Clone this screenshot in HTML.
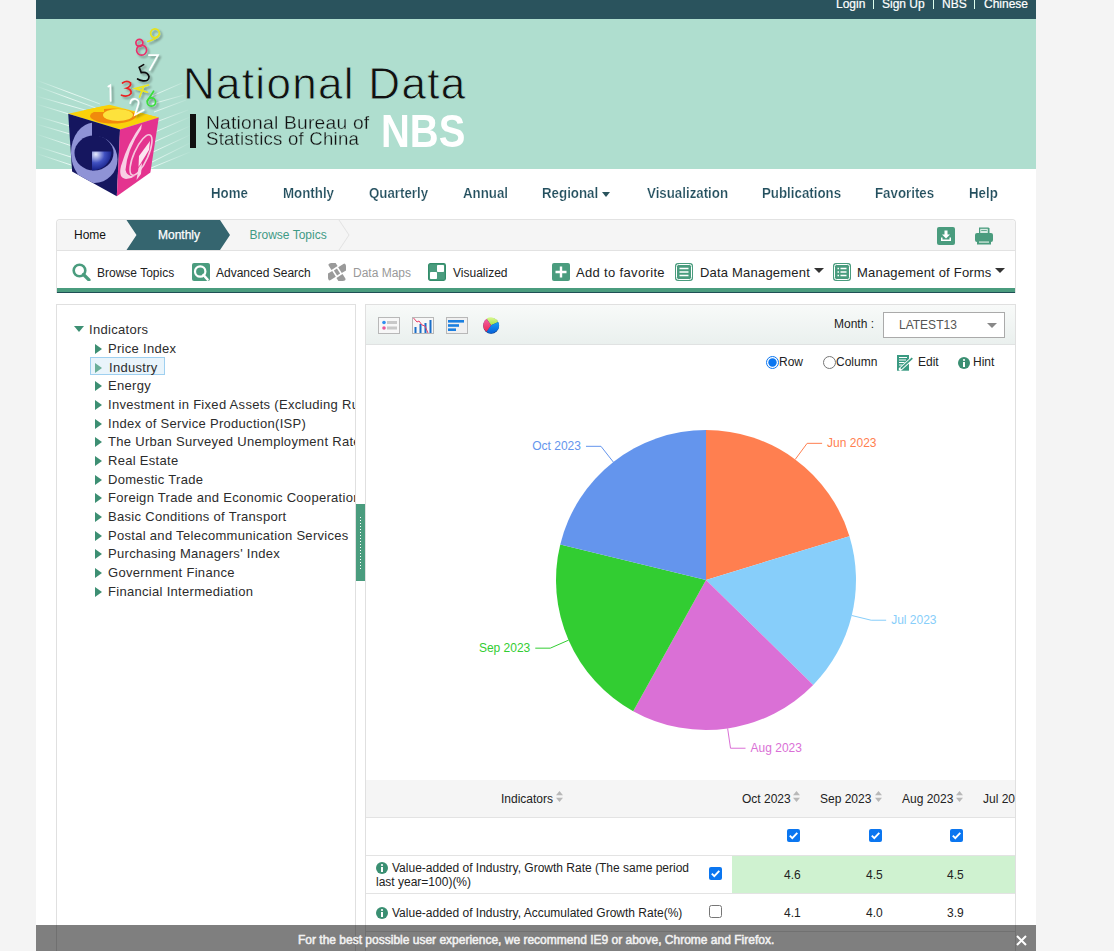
<!DOCTYPE html>
<html><head><meta charset="utf-8">
<style>
*{margin:0;padding:0;box-sizing:border-box}
html,body{width:1114px;height:951px;overflow:hidden;background:#f4f4f4;font-family:"Liberation Sans",sans-serif;color:#222}
.a{position:absolute;white-space:nowrap}
#wrap{position:absolute;left:36px;top:0;width:1000px;height:951px;background:#fff}
#topbar{position:absolute;left:36px;top:0;width:1000px;height:19px;background:#2a535d}
#banner{position:absolute;left:36px;top:19px;width:1000px;height:150px;background:#afdecf;overflow:hidden}
.tb{color:#fff;font-size:12px;top:-4px;line-height:16px;-webkit-text-stroke:0.2px #fff}
.sep{position:absolute;top:-1px;width:1px;height:10px;background:#dfe}
.nav{font-size:14px;font-weight:bold;color:#234f5e;top:185px;line-height:16px;transform:scaleX(0.95);transform-origin:0 0;-webkit-text-stroke:0.2px #fff}
#crumb{position:absolute;left:56px;top:219px;width:960px;height:74px;border:1px solid #e2e2e2;border-bottom:none;border-radius:4px 4px 0 0;background:#fff}
#crumbbar{position:absolute;left:0;top:0;width:958px;height:31px;background:#f5f5f5;border-bottom:1px solid #e2e2e2;border-radius:4px 4px 0 0}
#greenline{position:absolute;left:57px;top:288px;width:958px;height:4px;background:#4a9c7e}
#darkline{position:absolute;left:57px;top:292px;width:958px;height:1px;background:#1f4f55}
.tool{font-size:12px;top:266px;line-height:14px;color:#222}
.tool2{font-size:13px;top:265px;line-height:15px;color:#222;letter-spacing:0.2px}
#tree{position:absolute;left:56px;top:304px;width:300px;height:700px;border:1px solid #e0e0e0;background:#fff}
.tr{position:absolute;left:108px;font-size:13px;letter-spacing:0.3px;color:#2c2c2c;line-height:15px;white-space:nowrap}
.tri{position:absolute;left:95px;width:0;height:0;border-top:5px solid transparent;border-bottom:5px solid transparent;border-left:7px solid #3d8f73}
#chart{position:absolute;left:365px;top:304px;width:651px;height:700px;border:1px solid #e0e0e0;background:#fff}
#chead{position:absolute;left:0;top:0;width:649px;height:40px;background:linear-gradient(#f8faf9,#eaf0ee);border-bottom:1px solid #e0e2e2}
.sm{font-size:12px;line-height:14px;color:#222}
</style></head><body>
<div id="wrap"></div>
<div id="topbar"></div>
<div id="banner"></div>

<!-- top links -->
<div class="a tb" style="left:836px">Login</div>
<div class="sep" style="left:873px"></div>
<div class="a tb" style="left:882px">Sign Up</div>
<div class="sep" style="left:933px"></div>
<div class="a tb" style="left:942px">NBS</div>
<div class="sep" style="left:974px"></div>
<div class="a tb" style="left:984px">Chinese</div>


<!-- logo -->
<svg class="a" style="left:36px;top:19px" width="170" height="185" viewBox="36 19 170 185">
<defs>
<radialGradient id="ball" cx="0.2" cy="0.15" r="0.9"><stop offset="0" stop-color="#e8ecff"/><stop offset="0.5" stop-color="#4050c0"/><stop offset="1" stop-color="#101a80"/></radialGradient>
<clipPath id="lf"><polygon points="68.2,113.7 120,129.4 116.8,196.2 72.1,171.5"/></clipPath>
<clipPath id="rf"><polygon points="120,129.4 158.8,117.4 150.4,172.6 116.8,196.2"/></clipPath>
<clipPath id="tf"><polygon points="68.2,113.7 109.4,104.7 158.8,117.4 120,129.4"/></clipPath>
<clipPath id="mint"><rect x="36" y="19" width="170" height="150"/></clipPath>
</defs>
<linearGradient id="rfade" gradientUnits="userSpaceOnUse" x1="150" y1="0" x2="192" y2="0"><stop offset="0" stop-color="#f4fffb" stop-opacity="0.9"/><stop offset="1" stop-color="#f4fffb" stop-opacity="0"/></linearGradient>
<linearGradient id="lfade" gradientUnits="userSpaceOnUse" x1="36" y1="0" x2="100" y2="0"><stop offset="0" stop-color="#f4fffb" stop-opacity="0"/><stop offset="0.5" stop-color="#f4fffb" stop-opacity="0.8"/><stop offset="1" stop-color="#f4fffb" stop-opacity="0.5"/></linearGradient>
<g stroke="url(#lfade)" stroke-width="1" fill="none" clip-path="url(#mint)">
<path d="M36 80 L100 104"/><path d="M36 86 L96 108"/><path d="M36 96 L92 112"/><path d="M36 104 L82 118"/><path d="M36 116 L70 126"/><path d="M36 124 L70 134"/><path d="M36 134 L72 146"/><path d="M36 146 L74 158"/><path d="M38 154 L74 166"/>
</g>
<g stroke="url(#rfade)" stroke-width="1" fill="none" clip-path="url(#mint)">
<path d="M152 96 L182 83"/><path d="M152 104 L184 95"/><path d="M154 112 L186 100"/><path d="M156 122 L188 110"/><path d="M155 132 L190 117"/><path d="M154 142 L190 126"/><path d="M153 152 L192 134"/><path d="M152 162 L192 142"/><path d="M151 168 L190 152"/>
</g>
<polygon points="68.2,113.7 109.4,104.7 158.8,117.4 120,129.4" fill="#f9d20a"/>
<g clip-path="url(#tf)">
<ellipse cx="113" cy="116" rx="23" ry="7.5" fill="#f18a0c"/>
<ellipse cx="118" cy="115" rx="15" ry="6" fill="#fde23c"/>
<polygon points="84,104 104,104 104,112 84,112" fill="#f9d20a"/>
<polygon points="136,112 160,112 160,120 136,120" fill="#f9d20a"/>
</g>
<polygon points="68.2,113.7 120,129.4 116.8,196.2 72.1,171.5" fill="#15165f"/>
<g clip-path="url(#lf)">
<clipPath id="lhalf"><rect x="60" y="100" width="32" height="100"/></clipPath>
<clipPath id="rhalf"><rect x="92" y="100" width="40" height="100"/></clipPath>
<ellipse cx="94" cy="152.8" rx="23" ry="30.2" fill="#8f93d6" clip-path="url(#lhalf)"/>
<ellipse cx="94.5" cy="159.5" rx="23" ry="23.5" fill="#8f93d6" clip-path="url(#rhalf)"/>
<ellipse cx="94" cy="153" rx="19.5" ry="17.5" fill="#15165f"/>
<path d="M92 151.5 H111.5 A19.5 19 0 0 1 92 170.5 Z" fill="url(#ball)"/>

</g>
<polygon points="120,129.4 158.8,117.4 150.4,172.6 116.8,196.2" fill="#e4338f"/>
<g clip-path="url(#rf)">
<path d="M141.8 124 Q128 142 121 166 Q118 178 126 179 Q131 179 135 176 Q127 177 125.5 170 Q127 150 141.2 129 Z" fill="#f8cfe4"/>
<ellipse cx="141" cy="155" rx="7" ry="22" transform="rotate(24 141 155)" fill="none" stroke="#f6c6de" stroke-width="1.6"/>
<polygon points="139,156 150,141 149,150 138.5,167" fill="#fce6f1"/>
<polygon points="138.5,168 142,163 141,174 136.5,180" fill="#f8d4e6"/>
</g>
<filter id="nsh" x="-50%" y="-50%" width="200%" height="200%"><feGaussianBlur in="SourceAlpha" stdDeviation="1.2"/><feOffset dx="1.5" dy="1.5"/><feComponentTransfer><feFuncA type="linear" slope="0.35"/></feComponentTransfer><feMerge><feMergeNode/><feMergeNode in="SourceGraphic"/></feMerge></filter>
<g fill="none" stroke-width="1.7" stroke-linecap="round" filter="url(#nsh)">
<circle cx="155" cy="33.2" r="4.4" stroke="#e6e21c"/><path d="M159.4 34.5 Q156 39.5 147.8 41.5" stroke="#e6e21c"/>
<circle cx="139.4" cy="42.8" r="3.5" stroke="#e8306a"/><circle cx="141.6" cy="50.2" r="5" stroke="#e8306a"/>
<path d="M149 55.2 H158 L149.6 70" stroke="#fff"/>
<path d="M143.6 64.6 L139.2 67.4 L141.2 72.6 Q147.5 71.5 149 76.5 Q149 81.5 143 80.8 Q139.5 80.2 137.6 79" stroke="#111"/>
<path d="M108.3 86.5 L110.3 85.2 L110.6 100.8" stroke="#fff"/>
<path d="M122.5 83 Q127 80 130.5 82.8 Q131.5 86.5 126.5 88.2 Q132 89.5 131 93.5 Q128 97.5 121.5 95.2" stroke="#e92424"/>
<path d="M148.5 85 L135.2 88.6 L147.5 92.2 M143.8 86.3 L139.6 97" stroke="#ece61e"/>
<circle cx="151.4" cy="102" r="4.2" stroke="#3ade3a"/><path d="M147.3 101 L153.6 91.2" stroke="#3ade3a"/>
<path d="M130.2 103.2 Q131 98.6 135.6 99 Q139.8 100.2 138.2 104.6 L135 114.8 L143.8 110" stroke="#fff"/>
</g>
</svg>
<div class="a" style="left:183px;top:59px;font-size:44px;line-height:50px;color:#111;letter-spacing:1.3px;-webkit-text-stroke:0.8px #afdecf">National Data</div>
<div class="a" style="left:190px;top:114px;width:6px;height:34px;background:#111"></div>
<div class="a" style="left:206px;top:114px;font-size:18px;line-height:18px;color:#111;letter-spacing:0.2px;transform:scaleX(1.07);transform-origin:0 0;-webkit-text-stroke:0.3px #afdecf">National Bureau of</div>
<div class="a" style="left:206px;top:130px;font-size:18px;line-height:18px;color:#111;letter-spacing:0.2px;transform:scaleX(1.035);transform-origin:0 0;-webkit-text-stroke:0.3px #afdecf">Statistics of China</div>
<div class="a" style="left:381px;top:104px;font-size:47px;line-height:54px;color:#fff;font-weight:bold;transform:scaleX(0.85);transform-origin:0 0">NBS</div>

<!-- nav -->
<div class="a nav" style="left:211px">Home</div>
<div class="a nav" style="left:283px">Monthly</div>
<div class="a nav" style="left:369px">Quarterly</div>
<div class="a nav" style="left:463px">Annual</div>
<div class="a nav" style="left:542px">Regional</div>
<div class="a" style="left:602px;top:192px;width:0;height:0;border-left:4.5px solid transparent;border-right:4.5px solid transparent;border-top:5px solid #2a535d"></div>
<div class="a nav" style="left:647px">Visualization</div>
<div class="a nav" style="left:761.5px">Publications</div>
<div class="a nav" style="left:874.5px">Favorites</div>
<div class="a nav" style="left:969px">Help</div>

<!-- breadcrumb -->
<div id="crumb"><div id="crumbbar"></div></div>
<svg class="a" style="left:57px;top:220px" width="300" height="30">
<polygon points="69.5,0 163,0 173,15 163,30 69.5,30 79.5,15" fill="#35656f"/>
<polyline points="282,0 292,15 282,30" fill="none" stroke="#e2e2e2" stroke-width="1"/>
</svg>
<div class="a" style="left:74px;top:228px;font-size:12px;line-height:14px;color:#111">Home</div>
<div class="a" style="left:158px;top:228px;font-size:12px;line-height:14px;color:#fff;-webkit-text-stroke:0.25px #fff">Monthly</div>
<div class="a" style="left:249.5px;top:228px;font-size:12px;line-height:14px;color:#3f9a85">Browse Topics</div>
<!-- download icon -->
<svg class="a" style="left:937px;top:227px" width="18" height="18" viewBox="0 0 18 18">
<rect x="0" y="0" width="18" height="18" rx="2" fill="#4a9c7e"/>
<path d="M7.5 3.5h3v4h2.5l-4 4-4-4h2.5z" fill="#fff"/>
<path d="M4 10.5v3.5h10v-3.5h-1.5v2h-7v-2z" fill="#fff"/>
</svg>
<!-- print icon -->
<svg class="a" style="left:975px;top:227px" width="18" height="18" viewBox="0 0 18 18">
<path d="M4 0.5h9.5l1 1v5h-10.5z" fill="#4a9c7e"/>
<rect x="5.2" y="1.8" width="7.6" height="4.5" fill="#d8ebe3"/>
<rect x="6.2" y="3.2" width="5.6" height="0.8" fill="#4a9c7e"/>
<rect x="0" y="6" width="18" height="9" rx="2" fill="#4a9c7e"/>
<rect x="2" y="14" width="14" height="3.5" fill="#4a9c7e"/>
<rect x="4" y="14.3" width="10" height="1.6" fill="#b7d9cb"/>
</svg>
<!-- toolbar -->
<svg class="a" style="left:72px;top:263px" width="20" height="18" viewBox="0 0 20 18">
<circle cx="7.5" cy="7.5" r="5.8" fill="none" stroke="#4a9c7e" stroke-width="2.6"/>
<path d="M11.5 11.5 L17 17" stroke="#4a9c7e" stroke-width="3.2" stroke-linecap="round"/>
</svg>
<div class="a tool" style="left:97px">Browse Topics</div>
<svg class="a" style="left:192px;top:263px" width="18" height="18" viewBox="0 0 18 18">
<rect x="0" y="0" width="18" height="18" rx="2" fill="#4a9c7e"/>
<circle cx="8.2" cy="8.5" r="5.2" fill="#4a9c7e" stroke="#fff" stroke-width="2.2"/>
<path d="M11.5 12 L15.5 16.5" stroke="#fff" stroke-width="2.6" stroke-linecap="round"/>
</svg>
<div class="a tool" style="left:216px">Advanced Search</div>
<svg class="a" style="left:328px;top:263px" width="18" height="18" viewBox="0 0 18 18">
<defs><clipPath id="dmc"><rect x="0" y="0" width="18" height="18" rx="3.5"/></clipPath></defs>
<g clip-path="url(#dmc)" fill="#9a9a9a"><g transform="translate(9 9) rotate(-32)">
<rect x="-1.8" y="-3" width="3.6" height="6"/>
<rect x="-3.6" y="-20" width="7.2" height="15.3"/>
<rect x="-3.6" y="4.7" width="7.2" height="15.3"/>
<rect x="-20" y="-3.4" width="16.5" height="6.8"/>
<rect x="3.5" y="-3.4" width="16.5" height="6.8"/>
</g></g>
</svg>
<div class="a tool" style="left:353px;color:#999">Data Maps</div>
<svg class="a" style="left:428px;top:263px" width="18" height="18" viewBox="0 0 18 18">
<rect x="0.6" y="0.6" width="16.8" height="16.8" rx="1.8" fill="#4a9c7e" stroke="#338c6a" stroke-width="1.2"/>
<rect x="9" y="2" width="7" height="7" rx="0.8" fill="#fff"/>
<rect x="2" y="9" width="7" height="7" rx="0.8" fill="#fff"/>
</svg>
<div class="a tool" style="left:453px">Visualized</div>
<svg class="a" style="left:552px;top:263px" width="18" height="18" viewBox="0 0 18 18">
<rect x="0" y="0" width="18" height="18" rx="2" fill="#4a9c7e"/>
<path d="M9 3.5 V14.5 M3.5 9 H14.5" stroke="#fff" stroke-width="2.4"/>
</svg>
<div class="a tool2" style="left:576px;letter-spacing:0.34px">Add to favorite</div>
<svg class="a" style="left:675px;top:263px" width="18" height="18" viewBox="0 0 18 18">
<rect x="0" y="0" width="18" height="18" rx="3" fill="#4a9c7e"/>
<rect x="1.5" y="1.5" width="15" height="15" rx="2" fill="none" stroke="#fff" stroke-width="1"/>
<path d="M4.5 5.5 H13.5 M4.5 9 H13.5 M4.5 12.5 H13.5" stroke="#fff" stroke-width="1.4"/>
</svg>
<div class="a tool2" style="left:700px">Data Management</div>
<div class="a" style="left:814px;top:268px;width:0;height:0;border-left:5px solid transparent;border-right:5px solid transparent;border-top:5px solid #333"></div>
<svg class="a" style="left:833px;top:263px" width="18" height="18" viewBox="0 0 18 18">
<rect x="0" y="0" width="18" height="18" rx="3" fill="#4a9c7e"/>
<rect x="1.5" y="1.5" width="15" height="15" rx="2" fill="none" stroke="#fff" stroke-width="1"/>
<path d="M4.5 5.5 H6 M7.5 5.5 H13.5 M4.5 9 H6 M7.5 9 H13.5 M4.5 12.5 H6 M7.5 12.5 H13.5" stroke="#fff" stroke-width="1.4"/>
</svg>
<div class="a tool2" style="left:857px">Management of Forms</div>
<div class="a" style="left:995px;top:268px;width:0;height:0;border-left:5px solid transparent;border-right:5px solid transparent;border-top:5px solid #333"></div>
<div id="greenline"></div><div id="darkline"></div>

<!-- tree -->
<div id="tree"></div>
<div class="a" style="left:57px;top:305px;width:298px;height:646px;overflow:hidden">
<div class="a" style="left:17px;top:21px;width:0;height:0;border-left:5.5px solid transparent;border-right:5.5px solid transparent;border-top:6.5px solid #3d8f73"></div>
<div class="tr" style="left:32px;top:17px">Indicators</div>
<div class="a" style="left:33px;top:52px;width:75px;height:18px;background:#e9f4fb;border:1px solid #9fd0f0"></div>
<div class="tri" style="left:38px;top:38.5px"></div><div class="tr" style="left:51px;top:36px">Price Index</div>
<div class="tri" style="left:38px;top:57.5px;border-left-color:#6aae98"></div><div class="tr" style="left:52px;top:55px">Industry</div>
<div class="tri" style="left:38px;top:75.5px"></div><div class="tr" style="left:51px;top:73px">Energy</div>
<div class="tri" style="left:38px;top:94.5px"></div><div class="tr" style="left:51px;top:92px">Investment in Fixed Assets (Excluding Rural Households)</div>
<div class="tri" style="left:38px;top:113.5px"></div><div class="tr" style="left:51px;top:111px">Index of Service Production(ISP)</div>
<div class="tri" style="left:38px;top:131.5px"></div><div class="tr" style="left:51px;top:129px">The Urban Surveyed Unemployment Rate</div>
<div class="tri" style="left:38px;top:150.5px"></div><div class="tr" style="left:51px;top:148px">Real Estate</div>
<div class="tri" style="left:38px;top:169.5px"></div><div class="tr" style="left:51px;top:167px">Domestic Trade</div>
<div class="tri" style="left:38px;top:187.5px"></div><div class="tr" style="left:51px;top:185px">Foreign Trade and Economic Cooperation</div>
<div class="tri" style="left:38px;top:206.5px"></div><div class="tr" style="left:51px;top:204px">Basic Conditions of Transport</div>
<div class="tri" style="left:38px;top:225.5px"></div><div class="tr" style="left:51px;top:223px">Postal and Telecommunication Services</div>
<div class="tri" style="left:38px;top:243.5px"></div><div class="tr" style="left:51px;top:241px">Purchasing Managers&#39; Index</div>
<div class="tri" style="left:38px;top:262.5px"></div><div class="tr" style="left:51px;top:260px">Government Finance</div>
<div class="tri" style="left:38px;top:281.5px"></div><div class="tr" style="left:51px;top:279px">Financial Intermediation</div>
</div>
<div class="a" style="left:356px;top:504px;width:9px;height:77px;background:#4a9c7e"></div>
<div class="a" style="left:360px;top:517px;width:1px;height:52px;background:repeating-linear-gradient(#fff 0 1px,transparent 1px 3px)"></div>
<div id="chart"><div id="chead"></div></div>
<!-- chart header icons -->
<svg class="a" style="left:378px;top:317px" width="22" height="17" viewBox="0 0 22 17">
<rect x="0.5" y="0.5" width="21" height="16" fill="#f7f7f7" stroke="#b8b8b8"/>
<circle cx="6" cy="5.5" r="1.8" fill="#2f8ff0"/><circle cx="6" cy="11" r="1.8" fill="#e8589a"/>
<rect x="9" y="4" width="10" height="3" fill="#c8c8c8"/><rect x="9" y="9.5" width="10" height="3" fill="#c8c8c8"/>
</svg>
<svg class="a" style="left:412px;top:317px" width="22" height="17" viewBox="0 0 22 17">
<rect x="0.5" y="0.5" width="21" height="16" fill="#f7f7f7" stroke="#b8b8b8"/>
<rect x="2.5" y="10" width="2" height="6" fill="#1a6fc8"/><rect x="7.5" y="7" width="2" height="9" fill="#1a6fc8"/><rect x="12.5" y="6" width="2" height="10" fill="#1a6fc8"/><rect x="17.5" y="3" width="2" height="13" fill="#1a6fc8"/>
<polyline points="1.5,1 5,5 7,4 10,8 13,9 16,16" fill="none" stroke="#e8406a" stroke-width="1"/>
</svg>
<svg class="a" style="left:446px;top:317px" width="22" height="17" viewBox="0 0 22 17">
<rect x="0.5" y="0.5" width="21" height="16" fill="#f0f0f0" stroke="#b8b8b8"/>
<rect x="2" y="3" width="16" height="2.6" fill="#1a7fe0"/><rect x="2" y="7.2" width="11" height="2.6" fill="#1a7fe0"/><rect x="2" y="11.4" width="8" height="2.6" fill="#1a7fe0"/>
</svg>
<svg class="a" style="left:483px;top:317px" width="17" height="17" viewBox="0 0 17 17">
<defs><linearGradient id="pbb" x1="0" y1="0" x2="0" y2="1"><stop offset="0" stop-color="#18a0f8"/><stop offset="1" stop-color="#0860d8"/></linearGradient>
<linearGradient id="pbg" x1="0" y1="0" x2="0" y2="1"><stop offset="0" stop-color="#d8f890"/><stop offset="1" stop-color="#a8e048"/></linearGradient>
<linearGradient id="pbp" x1="0" y1="0" x2="0" y2="1"><stop offset="0" stop-color="#f060a8"/><stop offset="1" stop-color="#f02850"/></linearGradient></defs>
<circle cx="8.1" cy="8.8" r="7.9" fill="#0a3a80"/>
<path d="M8.1 8.3 L3.57 1.83 A7.9 7.9 0 0 1 15.26 4.96 Z" fill="url(#pbg)"/>
<path d="M8.1 8.3 L15.26 4.96 A7.9 7.9 0 0 1 3.57 14.77 Z" fill="url(#pbb)"/>
<path d="M8.1 8.3 L3.57 14.77 A7.9 7.9 0 0 1 3.57 1.83 Z" fill="url(#pbp)"/>
</svg>
<div class="a sm" style="left:834px;top:317px">Month :</div>
<div class="a" style="left:883px;top:312px;width:122px;height:26px;border:1px solid #aaa;background:#fff"></div>
<div class="a sm" style="left:899px;top:318px;color:#555">LATEST13</div>
<div class="a" style="left:987px;top:323px;width:0;height:0;border-left:5px solid transparent;border-right:5px solid transparent;border-top:5px solid #888"></div>
<!-- radios -->
<svg class="a" style="left:766px;top:356px" width="13" height="13" viewBox="0 0 13 13">
<circle cx="6.5" cy="6.5" r="6" fill="#fff" stroke="#0b76f0" stroke-width="1"/><circle cx="6.5" cy="6.5" r="4.2" fill="#0b76f0"/>
</svg>
<div class="a sm" style="left:779px;top:355px">Row</div>
<svg class="a" style="left:823px;top:356px" width="13" height="13" viewBox="0 0 13 13">
<circle cx="6.5" cy="6.5" r="6" fill="#fff" stroke="#767676" stroke-width="1"/>
</svg>
<div class="a sm" style="left:836px;top:355px">Column</div>
<svg class="a" style="left:897px;top:355px" width="17" height="16" viewBox="0 0 17 16">
<rect x="0" y="0" width="12" height="15.7" fill="#3a9a82"/>
<path d="M2 2.5 H10 M2 5 H9 M2 7.5 H7.5 M2 10 H5.5" stroke="#fff" stroke-width="1.1"/>
<path d="M3.5 14 L15.5 3" stroke="#fff" stroke-width="3.6" stroke-linecap="round"/>
<path d="M3.8 13.7 L15.3 3.2" stroke="#3a9a82" stroke-width="1.7"/>
</svg>
<div class="a sm" style="left:918px;top:355px">Edit</div>
<svg class="a" style="left:958px;top:357px" width="12" height="12" viewBox="0 0 12 12">
<circle cx="6" cy="6" r="6" fill="#3a8f72"/><circle cx="6" cy="3" r="1.1" fill="#fff"/><rect x="5" y="5" width="2" height="5" fill="#fff"/>
</svg>
<div class="a sm" style="left:973px;top:355px">Hint</div>
<!-- pie -->
<svg class="a" style="left:366px;top:345px" width="649" height="435" viewBox="366 345 649 435">
<path d="M706 580 L706.00 430.00 A150 150 0 0 1 849.44 536.13 Z" fill="#ff7f50"/>
<path d="M706 580 L849.44 536.13 A150 150 0 0 1 813.21 684.91 Z" fill="#87cefa"/>
<path d="M706 580 L813.21 684.91 A150 150 0 0 1 633.20 711.15 Z" fill="#da70d6"/>
<path d="M706 580 L633.20 711.15 A150 150 0 0 1 560.26 544.51 Z" fill="#32cd32"/>
<path d="M706 580 L560.26 544.51 A150 150 0 0 1 706.00 430.00 Z" fill="#6495ed"/>
<polyline points="795.22,459.42 807.11,443.34 822.11,443.34" fill="none" stroke="#ff7f50" stroke-width="1"/>
<text x="827.11" y="447.34" fill="#ff7f50" font-family="Liberation Sans" font-size="12" text-anchor="start">Jun 2023</text>
<polyline points="851.74,615.49 871.17,620.22 886.17,620.22" fill="none" stroke="#87cefa" stroke-width="1"/>
<text x="891.17" y="624.22" fill="#87cefa" font-family="Liberation Sans" font-size="12" text-anchor="start">Jul 2023</text>
<polyline points="727.64,728.43 730.53,748.22 745.53,748.22" fill="none" stroke="#da70d6" stroke-width="1"/>
<text x="750.53" y="752.22" fill="#da70d6" font-family="Liberation Sans" font-size="12" text-anchor="start">Aug 2023</text>
<polyline points="568.59,640.15 550.27,648.17 535.27,648.17" fill="none" stroke="#32cd32" stroke-width="1"/>
<text x="530.27" y="652.17" fill="#32cd32" font-family="Liberation Sans" font-size="12" text-anchor="end">Sep 2023</text>
<polyline points="613.33,462.05 600.97,446.32 585.97,446.32" fill="none" stroke="#6495ed" stroke-width="1"/>
<text x="580.97" y="450.32" fill="#6495ed" font-family="Liberation Sans" font-size="12" text-anchor="end">Oct 2023</text>
</svg>

<!-- table -->
<div class="a" style="left:366px;top:780px;width:649px;height:171px;overflow:hidden">
<div class="a" style="left:0;top:0;width:649px;height:38px;background:#f5f5f5;border-bottom:1px solid #e3e3e3"></div>
<div class="a" style="left:0;top:75px;width:649px;height:1px;background:#e3e3e3"></div>
<div class="a" style="left:366px;top:76px;width:283px;height:37px;background:#cff2d0"></div>
<div class="a" style="left:0;top:113px;width:649px;height:1px;background:#e3e3e3"></div>
<div class="a" style="left:0;top:151px;width:649px;height:1px;background:#e3e3e3"></div>
<div class="a sm" style="left:135px;top:12px">Indicators</div>
<div class="a sm" style="left:376px;top:12px">Oct 2023</div>
<div class="a sm" style="left:454px;top:12px">Sep 2023</div>
<div class="a sm" style="left:536px;top:12px">Aug 2023</div>
<div class="a sm" style="left:617px;top:12px">Jul 2023</div>
</div>
<svg class="a" style="left:556px;top:791px" width="7" height="11" viewBox="0 0 7 11"><path d="M3.5 0 L7 4.2 H0 Z M3.5 11 L7 6.8 H0 Z" fill="#b8b8b8"/></svg>
<svg class="a" style="left:793px;top:791px" width="7" height="11" viewBox="0 0 7 11"><path d="M3.5 0 L7 4.2 H0 Z M3.5 11 L7 6.8 H0 Z" fill="#b8b8b8"/></svg>
<svg class="a" style="left:875px;top:791px" width="7" height="11" viewBox="0 0 7 11"><path d="M3.5 0 L7 4.2 H0 Z M3.5 11 L7 6.8 H0 Z" fill="#b8b8b8"/></svg>
<svg class="a" style="left:956px;top:791px" width="7" height="11" viewBox="0 0 7 11"><path d="M3.5 0 L7 4.2 H0 Z M3.5 11 L7 6.8 H0 Z" fill="#b8b8b8"/></svg>
<svg class="a" style="left:787px;top:829px" width="13" height="13" viewBox="0 0 13 13"><rect x="0" y="0" width="13" height="13" rx="2" fill="#0b76f0"/><path d="M2.8 6.6 L5.3 9.1 L10.3 3.8" fill="none" stroke="#fff" stroke-width="1.9"/></svg>
<svg class="a" style="left:869px;top:829px" width="13" height="13" viewBox="0 0 13 13"><rect x="0" y="0" width="13" height="13" rx="2" fill="#0b76f0"/><path d="M2.8 6.6 L5.3 9.1 L10.3 3.8" fill="none" stroke="#fff" stroke-width="1.9"/></svg>
<svg class="a" style="left:950px;top:829px" width="13" height="13" viewBox="0 0 13 13"><rect x="0" y="0" width="13" height="13" rx="2" fill="#0b76f0"/><path d="M2.8 6.6 L5.3 9.1 L10.3 3.8" fill="none" stroke="#fff" stroke-width="1.9"/></svg>
<svg class="a" style="left:709px;top:867px" width="13" height="13" viewBox="0 0 13 13"><rect x="0" y="0" width="13" height="13" rx="2" fill="#0b76f0"/><path d="M2.8 6.6 L5.3 9.1 L10.3 3.8" fill="none" stroke="#fff" stroke-width="1.9"/></svg>
<svg class="a" style="left:709px;top:905px" width="13" height="13" viewBox="0 0 13 13"><rect x="0.5" y="0.5" width="12" height="12" rx="2" fill="#fff" stroke="#767676" stroke-width="1"/></svg>
<svg class="a" style="left:376px;top:862px" width="12" height="12" viewBox="0 0 12 12"><circle cx="6" cy="6" r="6" fill="#3a8f72"/><circle cx="6" cy="3" r="1.1" fill="#fff"/><rect x="5" y="5" width="2" height="5" fill="#fff"/></svg>
<svg class="a" style="left:376px;top:907px" width="12" height="12" viewBox="0 0 12 12"><circle cx="6" cy="6" r="6" fill="#3a8f72"/><circle cx="6" cy="3" r="1.1" fill="#fff"/><rect x="5" y="5" width="2" height="5" fill="#fff"/></svg>
<div class="a sm" style="left:392px;top:862px;line-height:13px">Value-added of Industry, Growth Rate (The same period</div>
<div class="a sm" style="left:376px;top:876px;line-height:13px">last year=100)(%)</div>
<div class="a sm" style="left:392px;top:906px">Value-added of Industry, Accumulated Growth Rate(%)</div>
<div class="a sm" style="left:784px;top:868px">4.6</div>
<div class="a sm" style="left:866px;top:868px">4.5</div>
<div class="a sm" style="left:947px;top:868px">4.5</div>
<div class="a sm" style="left:784px;top:906px">4.1</div>
<div class="a sm" style="left:866px;top:906px">4.0</div>
<div class="a sm" style="left:947px;top:906px">3.9</div>
<!-- notice overlay -->
<div class="a" style="left:36px;top:925px;width:1000px;height:26px;background:rgba(0,0,0,0.5)"></div>
<div class="a" style="left:298px;top:933px;font-size:12px;line-height:14px;color:#f2f2f2;-webkit-text-stroke:0.5px #f2f2f2">For the best possible user experience, we recommend IE9 or above, Chrome and Firefox.</div>
<svg class="a" style="left:1016px;top:935px" width="11" height="11" viewBox="0 0 11 11"><path d="M1 1 L10 10 M10 1 L1 10" stroke="#fff" stroke-width="2"/></svg>
</body></html>
